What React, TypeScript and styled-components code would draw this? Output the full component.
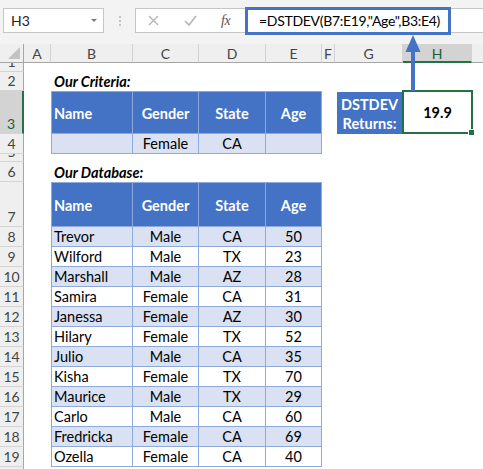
import React from 'react';
import styled, { createGlobalStyle, css } from 'styled-components';

const FONT = `Lato, "Open Sans", "Liberation Sans", sans-serif`;
const BLUE = '#4472C4';
const LINE = '#8EA9DB';
const BAND = '#D9E1F2';
const GREEN = '#217346';

const GlobalStyle = createGlobalStyle`
  html, body { margin: 0; padding: 0; background: #ffffff; }
  body { font-family: ${FONT}; }
`;

const COLS = [24, 27, 82, 66, 67, 56, 13, 68, 69, 64];
const LETTERS = ['A', 'B', 'C', 'D', 'E', 'F', 'G', 'H', 'I'];
const ROW_HEIGHTS = [9, 19, 43, 20, 8, 20, 45, 20, 20, 20, 20, 20, 20, 20, 20, 20, 20, 20, 20, 20];

const Page = styled.div`
  position: relative;
  width: 483px;
  height: 469px;
  overflow: hidden;
  background: #ffffff;
  font-family: ${FONT};
`;

/* ---------- formula bar ---------- */
const TopBar = styled.div`
  height: 44px;
  box-sizing: border-box;
  padding: 8px 0 0 3px;
  background: #f3f3f3;
  display: flex;
  align-items: flex-start;
`;

const NameBox = styled.div`
  width: 101px;
  height: 25px;
  box-sizing: border-box;
  background: #ffffff;
  border: 1px solid #c6c6c6;
  display: flex;
  align-items: center;
  justify-content: space-between;
  padding: 0 6px 0 7px;
  font-size: 14px;
  color: #222;
`;

const Caret = styled.span`
  width: 0;
  height: 0;
  border-left: 3px solid transparent;
  border-right: 3px solid transparent;
  border-top: 3px solid #7a7a7a;
`;

const Grip = styled.div`
  width: 31px;
  height: 25px;
  display: flex;
  flex-direction: column;
  align-items: center;
  justify-content: center;
  gap: 2px;
`;

const GripDot = styled.span`
  width: 2px;
  height: 2px;
  background: #c4c4c4;
`;

const FormulaBar = styled.div`
  flex: 1;
  height: 25px;
  box-sizing: border-box;
  background: #ffffff;
  border: 1px solid #c6c6c6;
  border-right: none;
  display: flex;
  align-items: center;
  padding-left: 12px;
`;

const BarIcon = styled.span<{ $w: number }>`
  width: ${p => p.$w}px;
  display: flex;
  align-items: center;
`;

const Fx = styled.span`
  font-family: "Liberation Serif", serif;
  font-style: italic;
  font-size: 14px;
  color: #555;
  letter-spacing: -0.5px;
`;

const FormulaText = styled.div`
  width: 206px;
  height: 28px;
  box-sizing: border-box;
  border: 3px solid ${BLUE};
  display: flex;
  align-items: center;
  padding-left: 11px;
  font-size: 14px;
  letter-spacing: -0.3px;
  color: #000;
  white-space: nowrap;
  overflow: hidden;
`;

/* ---------- sheet ---------- */
const Sheet = styled.div`
  display: grid;
  grid-template-columns: ${COLS.map(c => `${c}px`).join(' ')};
  grid-template-rows: 19px ${ROW_HEIGHTS.map(r => `${r}px`).join(' ')};
  width: max-content;
`;

const Corner = styled.div`
  grid-row: 1;
  grid-column: 1;
  position: relative;
  background: #efefef;
  border-right: 1px solid #a6a6a6;
  border-bottom: 1px solid #a6a6a6;
  box-sizing: border-box;
  &::after {
    content: '';
    position: absolute;
    right: 3px;
    bottom: 3px;
    width: 12px;
    height: 12px;
    background: #c2c2c2;
    clip-path: polygon(100% 0, 100% 100%, 0 100%);
  }
`;

const ColHeader = styled.div<{ $col: number; $selected?: boolean }>`
  grid-row: 1;
  grid-column: ${p => p.$col};
  box-sizing: border-box;
  background: #efefef;
  border-right: 1px solid #d2d2d2;
  border-bottom: 1px solid #a6a6a6;
  display: flex;
  align-items: center;
  justify-content: center;
  font-size: 14px;
  color: #444;
  ${p =>
    p.$selected &&
    css`
      background: #d3d3d3;
      border-bottom: 2px solid ${GREEN};
      color: #1d5b38;
      padding-top: 1px;
    `}
`;

const RowHeader = styled.div<{ $row: number; $selected?: boolean }>`
  grid-row: ${p => p.$row};
  grid-column: 1;
  box-sizing: border-box;
  background: #efefef;
  border-right: 1px solid #a6a6a6;
  border-bottom: 1px solid #d4d4d4;
  display: flex;
  align-items: flex-end;
  justify-content: center;
  overflow: hidden;
  font-size: 14px;
  line-height: 18px;
  color: #444;
  ${p =>
    p.$selected &&
    css`
      background: #d3d3d3;
      border-right: 2px solid ${GREEN};
      color: #1d5b38;
    `}
`;

const Caption = styled.div<{ $row: number }>`
  grid-row: ${p => p.$row};
  grid-column: 3;
  display: flex;
  align-items: flex-end;
  padding: 0 0 1px 3px;
  white-space: nowrap;
  font-size: 14.5px;
  font-weight: 700;
  font-style: italic;
  color: #000;
`;

type Kind = 'head' | 'band' | 'plain';

const TCell = styled.div<{
  $row: number;
  $col: number;
  $kind: Kind;
  $left?: boolean;
  $top?: boolean;
  $start?: boolean;
}>`
  grid-row: ${p => p.$row};
  grid-column: ${p => p.$col};
  box-sizing: border-box;
  display: flex;
  align-items: center;
  justify-content: ${p => (p.$start ? 'flex-start' : 'center')};
  padding: ${p => (p.$start ? '0 0 0 2px' : '0')};
  border-right: 1px solid ${LINE};
  border-bottom: 1px solid ${LINE};
  ${p => p.$left && css`border-left: 1px solid ${LINE};`}
  ${p => p.$top && css`border-top: 1px solid ${LINE};`}
  font-size: 14.5px;
  white-space: nowrap;
  color: #000;
  background: ${p => (p.$kind === 'head' ? BLUE : p.$kind === 'band' ? BAND : '#ffffff')};
  ${p =>
    p.$kind === 'head' &&
    css`
      color: #ffffff;
      font-weight: 700;
      padding-top: 2px;
    `}
`;

const ResultLabel = styled.div`
  grid-row: 4;
  grid-column: 8;
  margin: 1px 1px 0 2px;
  background: ${BLUE};
  color: #ffffff;
  font-weight: 700;
  font-size: 14.5px;
  line-height: 19px;
  display: flex;
  flex-direction: column;
  align-items: center;
  justify-content: center;
  padding-top: 2px;
`;

const ResultCell = styled.div`
  grid-row: 4;
  grid-column: 9;
  position: relative;
  margin: -1px -1px 0 -1px;
  border: 2px solid ${GREEN};
  display: flex;
  align-items: center;
  justify-content: center;
  font-weight: 700;
  font-size: 14.5px;
  color: #000;
  &::after {
    content: '';
    position: absolute;
    right: -4px;
    bottom: -4px;
    width: 5px;
    height: 5px;
    background: ${GREEN};
    border: 1px solid #ffffff;
  }
`;

const Arrow = styled.svg`
  position: absolute;
  left: 404px;
  top: 34px;
`;

const CRITERIA_HEAD = ['Name', 'Gender', 'State', 'Age'];
const CRITERIA_ROW = ['', 'Female', 'CA', ''];

const DATA: [string, string, string, number][] = [
  ['Trevor', 'Male', 'CA', 50],
  ['Wilford', 'Male', 'TX', 23],
  ['Marshall', 'Male', 'AZ', 28],
  ['Samira', 'Female', 'CA', 31],
  ['Janessa', 'Female', 'AZ', 30],
  ['Hilary', 'Female', 'TX', 52],
  ['Julio', 'Male', 'CA', 35],
  ['Kisha', 'Female', 'TX', 70],
  ['Maurice', 'Male', 'TX', 29],
  ['Carlo', 'Male', 'CA', 60],
  ['Fredricka', 'Female', 'CA', 69],
  ['Ozella', 'Female', 'CA', 40],
];

function TableRow({ row, cells, kind, top }: { row: number; cells: (string | number)[]; kind: Kind; top?: boolean }) {
  return (
    <>
      {cells.map((c, i) => (
        <TCell key={i} $row={row + 1} $col={i + 3} $kind={kind} $left={i === 0} $top={top} $start={i === 0}>
          {c}
        </TCell>
      ))}
    </>
  );
}

export default function App() {
  return (
    <Page>
      <GlobalStyle />
      <TopBar>
        <NameBox>
          <span>H3</span>
          <Caret />
        </NameBox>
        <Grip>
          <GripDot />
          <GripDot />
          <GripDot />
        </Grip>
        <FormulaBar>
          <BarIcon $w={36}>
            <svg width="11" height="11" viewBox="0 0 11 11">
              <path d="M1 1 L10 10 M10 1 L1 10" stroke="#b5b5b5" strokeWidth="1.4" fill="none" />
            </svg>
          </BarIcon>
          <BarIcon $w={37}>
            <svg width="13" height="11" viewBox="0 0 13 11">
              <path d="M1 6 L5 10 L12 1" stroke="#b5b5b5" strokeWidth="1.6" fill="none" />
            </svg>
          </BarIcon>
          <BarIcon $w={24}>
            <Fx>fx</Fx>
          </BarIcon>
          <FormulaText>=DSTDEV(B7:E19,"Age",B3:E4)</FormulaText>
        </FormulaBar>
      </TopBar>

      <Sheet>
        <Corner />
        {LETTERS.map((l, i) => (
          <ColHeader key={l} $col={i + 2} $selected={l === 'H'}>
            {l}
          </ColHeader>
        ))}
        {ROW_HEIGHTS.map((_, i) => (
          <RowHeader key={i} $row={i + 2} $selected={i + 1 === 3}>
            {i + 1}
          </RowHeader>
        ))}

        <Caption $row={3}>Our Criteria:</Caption>
        <TableRow row={3} cells={CRITERIA_HEAD} kind="head" top />
        <TableRow row={4} cells={CRITERIA_ROW} kind="band" />

        <ResultLabel>
          <span>DSTDEV</span>
          <span>Returns:</span>
        </ResultLabel>
        <ResultCell>19.9</ResultCell>

        <Caption $row={7}>Our Database:</Caption>
        <TableRow row={7} cells={CRITERIA_HEAD} kind="head" top />
        {DATA.map((d, i) => (
          <TableRow key={d[0]} row={8 + i} cells={d} kind={i % 2 === 0 ? 'band' : 'plain'} />
        ))}
      </Sheet>

      <Arrow width="18" height="57" viewBox="0 0 18 57">
        <path d="M9 1 L16.5 18 L1.5 18 Z" fill={BLUE} />
        <rect x="7" y="17" width="4" height="40" fill={BLUE} />
      </Arrow>
    </Page>
  );
}
